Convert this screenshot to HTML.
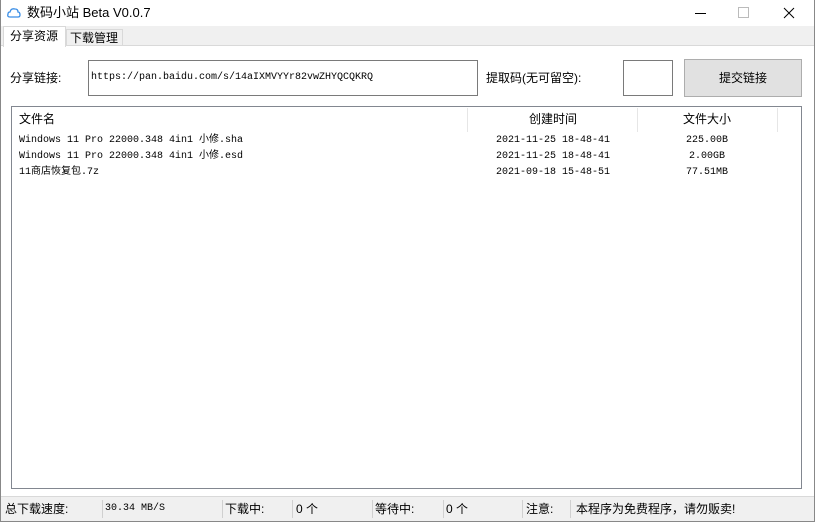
<!DOCTYPE html>
<html><head><meta charset="utf-8"><style>
*{margin:0;padding:0;box-sizing:border-box}
body{width:815px;height:522px;position:relative;overflow:hidden;background:#fff;font-family:"Liberation Sans","Noto Sans CJK SC",sans-serif;font-size:12px;color:#000}
.a{position:absolute;white-space:nowrap;line-height:16px}
.m{font-family:"Liberation Mono","Noto Sans CJK SC",monospace;font-size:10px;line-height:16px}
.frame{position:absolute;left:0;top:0;width:815px;height:522px;border:1px solid #888;border-top:none;pointer-events:none}
.sep{position:absolute;top:500px;width:1px;height:18px;background:#d0d0d0}
.hs{position:absolute;top:108px;width:1px;height:24px;background:#e6e6e6}
</style></head><body>
<div class="a" style="left:0;top:0;width:815px;height:26px;background:#fff"></div>
<svg class="a" style="left:7px;top:7px" width="14" height="12" viewBox="0 0 14 12"><path d="M3 10 Q0 10 1 7 Q1 5 3 5 Q4 1 8 2 Q11 2 11 5 Q13 5 13 8 Q13 10 11 10 Z" fill="none" stroke="#3a8ee6" stroke-width="1.3"/></svg>
<div class="a" style="left:27px;top:5px;font-size:13px">数码小站 Beta V0.0.7</div>
<div class="a" style="left:695px;top:13px;width:11px;height:1px;background:#000"></div>
<div class="a" style="left:738px;top:7px;width:11px;height:11px;border:1px solid #bbb"></div>
<svg class="a" style="left:783px;top:7px" width="12" height="12"><path d="M1 1L11 11M11 1L1 11" stroke="#000" stroke-width="1"/></svg>
<div class="a" style="left:1px;top:26px;width:813px;height:20px;background:#f0f0f0;border-bottom:1px solid #d9d9d9"></div>
<div class="a" style="left:3px;top:26px;width:63px;height:21px;background:#fff;border:1px solid #d9d9d9;border-bottom:none"></div>
<div class="a" style="left:10px;top:28px">分享资源</div>
<div class="a" style="left:66px;top:29px;width:57px;height:17px;border:1px solid #d9d9d9;border-bottom:none"></div>
<div class="a" style="left:70px;top:30px">下载管理</div>
<div class="a" style="left:10px;top:70px">分享链接:</div>
<div class="a" style="left:88px;top:60px;width:390px;height:36px;border:1px solid #7a7a7a"></div>
<div class="a m" style="left:91px;top:70px">https://pan.baidu.com/s/14aIXMVYYr82vwZHYQCQKRQ</div>
<div class="a" style="left:486px;top:70px">提取码(无可留空):</div>
<div class="a" style="left:623px;top:60px;width:50px;height:36px;border:1px solid #7a7a7a"></div>
<div class="a" style="left:684px;top:59px;width:118px;height:38px;background:#e1e1e1;border:1px solid #adadad"></div>
<div class="a" style="left:719px;top:70px">提交链接</div>
<div class="a" style="left:11px;top:106px;width:791px;height:383px;border:1px solid #828790"></div>
<div class="hs" style="left:467px"></div><div class="hs" style="left:637px"></div><div class="hs" style="left:777px"></div>
<div class="a" style="left:19px;top:111px">文件名</div>
<div class="a" style="left:529px;top:111px">创建时间</div>
<div class="a" style="left:683px;top:111px">文件大小</div>
<div class="a m" style="left:19px;top:133px">Windows 11 Pro 22000.348 4in1 小修.sha</div>
<div class="a m" style="left:19px;top:149px">Windows 11 Pro 22000.348 4in1 小修.esd</div>
<div class="a m" style="left:19px;top:165px">11商店恢复包.7z</div>
<div class="a m" style="left:496px;top:133px">2021-11-25 18-48-41</div>
<div class="a m" style="left:496px;top:149px">2021-11-25 18-48-41</div>
<div class="a m" style="left:496px;top:165px">2021-09-18 15-48-51</div>
<div class="a m" style="left:686px;top:133px">225.00B</div>
<div class="a m" style="left:689px;top:149px">2.00GB</div>
<div class="a m" style="left:686px;top:165px">77.51MB</div>
<div class="a" style="left:1px;top:496px;width:813px;height:26px;background:#f0f0f0;border-top:1px solid #d9d9d9"></div>
<div class="sep" style="left:102px"></div><div class="sep" style="left:222px"></div><div class="sep" style="left:292px"></div><div class="sep" style="left:372px"></div><div class="sep" style="left:443px"></div><div class="sep" style="left:522px"></div><div class="sep" style="left:570px"></div>
<div class="a" style="left:5px;top:501px">总下载速度:</div>
<div class="a m" style="left:105px;top:501px">30.34 MB/S</div>
<div class="a" style="left:225px;top:501px">下载中:</div>
<div class="a" style="left:296px;top:501px">0 个</div>
<div class="a" style="left:375px;top:501px">等待中:</div>
<div class="a" style="left:446px;top:501px">0 个</div>
<div class="a" style="left:526px;top:501px">注意:</div>
<div class="a" style="left:576px;top:501px">本程序为免费程序，请勿贩卖!</div>
<div class="frame"></div>
</body></html>
